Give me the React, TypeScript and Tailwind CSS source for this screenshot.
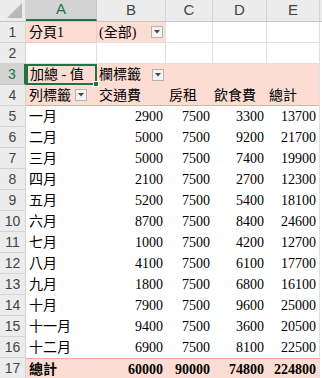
import React from "react";

const months = [
  ["一月", 2900, 7500, 3300, 13700],
  ["二月", 5000, 7500, 9200, 21700],
  ["三月", 5000, 7500, 7400, 19900],
  ["四月", 2100, 7500, 2700, 12300],
  ["五月", 5200, 7500, 5400, 18100],
  ["六月", 8700, 7500, 8400, 24600],
  ["七月", 1000, 7500, 4200, 12700],
  ["八月", 4100, 7500, 6100, 17700],
  ["九月", 1800, 7500, 6800, 16100],
  ["十月", 7900, 7500, 9600, 25000],
  ["十一月", 9400, 7500, 3600, 20500],
  ["十二月", 6900, 7500, 8100, 22500],
] as const;

const widths = ["w-[71px]", "w-[69px]", "w-[47px]", "w-[54px]", "w-[53px]"];

const FilterButton = () => (
  <span className="flex h-[12px] w-[12px] shrink-0 items-center justify-center border border-[#b4b4b4] bg-[#f3f3f3]">
    <svg width="6" height="4" viewBox="0 0 6 4">
      <path d="M0 0H6L3 3.5Z" fill="#4a4a4a" />
    </svg>
  </span>
);

const RowHead = ({ n, active }: { n: number; active?: boolean }) => (
  <div
    className={
      active
        ? "flex w-[26px] shrink-0 items-center justify-center border-r-2 border-b border-r-[#217346] border-b-[#c8c8c8] bg-[#d3d3d3] text-[#217346]"
        : "flex w-[26px] shrink-0 items-center justify-center border-r border-b border-[#d4d4d4] bg-[#ececec] text-[#444]"
    }
  >
    {n}
  </div>
);

export default function App() {
  return (
    <div
      className="h-[378px] w-[322px] overflow-hidden bg-white text-[14px] text-black"
      style={{ fontFamily: '"Liberation Serif", "Noto Sans CJK TC", serif' }}
    >
      {/* column headers */}
      <div
        className="flex h-[22px] border-b border-[#c6c6c6] bg-[#ececec] text-[15px] text-[#444]"
        style={{ fontFamily: '"Liberation Sans", sans-serif' }}
      >
        <div className="flex w-[26px] items-end justify-end border-r border-[#d4d4d4] p-[3px]">
          <svg width="15" height="15" viewBox="0 0 15 15">
            <path d="M15 0V15H0Z" fill="#b9b9b9" />
          </svg>
        </div>
        <div className="flex w-[71px] items-center justify-center border-b-2 border-r border-b-[#217346] border-r-[#c6c6c6] bg-[#d3d3d3] text-[#217346]">
          A
        </div>
        {["B", "C", "D", "E"].map((c, i) => (
          <div
            key={c}
            className={`flex ${widths[i + 1]} items-center justify-center border-r border-[#d4d4d4]`}
          >
            {c}
          </div>
        ))}
      </div>

      {/* row 1 */}
      <div className="flex h-[21px]">
        <div style={{ fontFamily: '"Liberation Sans", sans-serif' }} className="flex">
          <RowHead n={1} />
        </div>
        <div className="flex w-[71px] items-center border-r border-b border-[#f1c9c0] bg-[#fcdcd3] pl-[3px]">
          分頁1
        </div>
        <div className="flex w-[69px] items-center justify-between border-r border-b border-[#e1e1e1] bg-[#fcdcd3] pr-[2px] pl-[2px]">
          <span>(全部)</span>
          <FilterButton />
        </div>
        <div className="w-[47px] border-r border-b border-[#e1e1e1]" />
        <div className="w-[54px] border-r border-b border-[#e1e1e1]" />
        <div className="w-[53px] border-r border-b border-[#e1e1e1]" />
      </div>

      {/* row 2 */}
      <div className="flex h-[21px]" style={{ fontFamily: '"Liberation Sans", sans-serif' }}>
        <RowHead n={2} />
        {widths.map((w) => (
          <div key={w} className={`${w} border-r border-b border-[#e1e1e1]`} />
        ))}
      </div>

      {/* row 3 */}
      <div className="flex h-[21px]">
        <div style={{ fontFamily: '"Liberation Sans", sans-serif' }} className="flex">
          <RowHead n={3} active />
        </div>
        <div className="relative flex w-[71px] items-center border-2 border-[#217346] bg-[#fcdcd3] pl-[2px]">
          加總 - 值
          <span className="absolute -right-[4px] -bottom-[4px] h-[6px] w-[6px] border border-white bg-[#217346]" />
        </div>
        <div className="flex w-[69px] items-center justify-between bg-[#fcdcd3] pr-[2px] pl-[2px]">
          <span>欄標籤</span>
          <FilterButton />
        </div>
        <div className="w-[154px] border-r border-[#e1e1e1] bg-[#fcdcd3]" />
      </div>

      {/* row 4 */}
      <div className="flex h-[21px]">
        <div style={{ fontFamily: '"Liberation Sans", sans-serif' }} className="flex">
          <RowHead n={4} />
        </div>
        <div className="flex w-[71px] items-center gap-[4px] border-b border-[#f2a797] bg-[#fcdcd3] pl-[3px]">
          <span>列標籤</span>
          <FilterButton />
        </div>
        <div className="flex w-[69px] items-center border-b border-[#f2a797] bg-[#fcdcd3] pl-[2px]">交通費</div>
        <div className="flex w-[47px] items-center border-b border-[#f2a797] bg-[#fcdcd3] pl-[3px]">房租</div>
        <div className="flex w-[54px] items-center border-b border-[#f2a797] bg-[#fcdcd3] pl-[1px]">飲食費</div>
        <div className="flex w-[53px] items-center border-r border-b border-[#f2a797] border-r-[#e1e1e1] bg-[#fcdcd3] pl-[2px]">總計</div>
      </div>

      {/* month rows */}
      {months.map((m, i) => (
        <div key={m[0]} className="flex h-[21px]">
          <div style={{ fontFamily: '"Liberation Sans", sans-serif' }} className="flex">
            <RowHead n={i + 5} />
          </div>
          <div className="flex w-[71px] items-center pl-[3px]">{m[0]}</div>
          {m.slice(1).map((v, j) => (
            <div
              key={j}
              className={`flex ${widths[j + 1]} items-center justify-end pr-[3px] ${j === 3 ? "border-r border-[#e1e1e1]" : ""}`}
            >
              {v}
            </div>
          ))}
        </div>
      ))}

      {/* row 17 */}
      <div className="flex h-[21px] font-bold">
        <div style={{ fontFamily: '"Liberation Sans", sans-serif' }} className="flex font-normal">
          <RowHead n={17} />
        </div>
        <div className="flex w-[71px] items-center border-t border-[#f2a797] bg-[#fcdcd3] pl-[3px]">總計</div>
        {[60000, 90000, 74800, 224800].map((v, j) => (
          <div
            key={j}
            className={`flex ${widths[j + 1]} items-center justify-end border-t border-[#f2a797] bg-[#fcdcd3] pr-[3px] ${j === 3 ? "border-r border-r-[#e1e1e1]" : ""}`}
          >
            {v}
          </div>
        ))}
      </div>
    </div>
  );
}
